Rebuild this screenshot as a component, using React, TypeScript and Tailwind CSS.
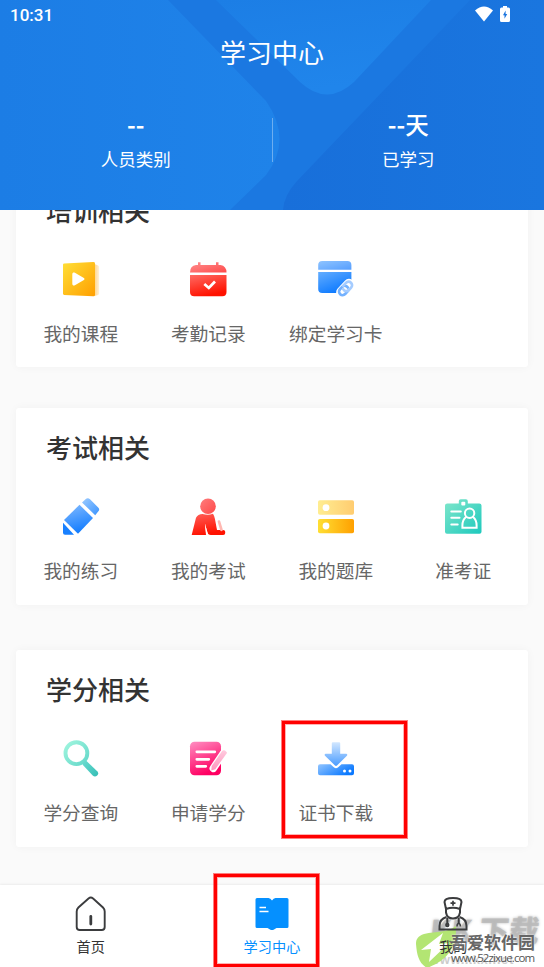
import type { ReactNode } from 'react';

type MenuItem = { label: string; icon: ReactNode; marked?: boolean };
type MenuSection = { title: string; items: MenuItem[]; className: string };

function Gradient({ id, from, to, x2 = '1', y2 = '1' }: { id: string; from: string; to: string; x2?: string; y2?: string }) {
  return (
    <linearGradient id={id} x1="0" y1="0" x2={x2} y2={y2}>
      <stop stopColor={from} />
      <stop offset="1" stopColor={to} />
    </linearGradient>
  );
}

function CourseIcon() {
  return (
    <svg viewBox="0 0 40 40" className="size-10">
      <defs>
        <Gradient id="course" from="#ffdf37" to="#ff9f00" />
        <Gradient id="coursePage" from="#ffd68a" to="#fff0d8" y2="0" />
      </defs>
      <path d="M33.500 4l3.700 1.600q.9.500.9 1.500v26.500q0 1-.9 1.400l-3.700 1z" fill="url(#coursePage)" />
      <path d="M3.200 3.500L32.300 2q1.700 0 1.700 1.400V35q0 1.300-1.700 1.200L3.200 34.900Q2 34.800 2 33.700V4.800q0-1.200 1.200-1.300z" fill="url(#course)" />
      <path d="M11.300 14.300c0-1.700 1.300-2.300 2.600-1.500l9 5.200q1.500 1 0 2l-9 5.200c-1.300.8-2.600.2-2.600-1.400z" fill="#fff" />
    </svg>
  );
}

function AttendanceIcon() {
  return (
    <svg viewBox="0 0 40 40" className="size-10">
      <defs>
        <Gradient id="calTop" from="#ff8f8f" to="#ff4a4a" />
        <Gradient id="calBody" from="#ff6a63" to="#ff1200" x2=".4" />
      </defs>
      <path d="M10 2.300h2.500V5h15.500V2.300h2.500V5h2q6 1 6 7.500H2Q2 5.500 8 5h2z" fill="url(#calTop)" />
      <path d="M2 15h36.500v17q0 4.200-4.200 4.200H6.200Q2 36.200 2 32z" fill="url(#calBody)" />
      <path d="M16.300 24l4.500 4 6.200-6.500" fill="none" stroke="#fff" strokeWidth="2.700" />
    </svg>
  );
}

function BindCardIcon() {
  return (
    <svg viewBox="0 0 40 40" className="size-10">
      <defs>
        <Gradient id="cardTop" from="#8fc4ff" to="#559eff" />
        <Gradient id="cardBody" from="#63adff" to="#0a78ff" x2=".6" />
      </defs>
      <path d="M2.200 9.700V5q0-4 4-4h25.200q4 0 4 4v4.700z" fill="url(#cardTop)" />
      <path d="M2.200 12h33.200v8.500L21.500 33H6.200q-4 0-4-4z" fill="url(#cardBody)" />
      <g transform="rotate(-47 29.500 28.500)">
        <rect x="18.500" y="22.700" width="22" height="11.500" rx="5.700" fill="#fff" />
        <path d="M29.500 32h-4.300a3.500 3.500 0 0 1 0-7h3.300a3.500 3.500 0 0 1 3.300 4.500" fill="none" stroke="#74b2ff" strokeWidth="2.700" strokeLinecap="round" />
        <path d="M29.800 25H34a3.500 3.500 0 0 1 0 7h-3.300a3.500 3.500 0 0 1-3.300-4.500" fill="none" stroke="#a5ccff" strokeWidth="2.700" strokeLinecap="round" />
      </g>
    </svg>
  );
}

function PracticeIcon() {
  return (
    <svg viewBox="0 0 40 40" className="size-10">
      <defs>
        <Gradient id="pencil" from="#83bbff" to="#157eff" x2=".3" />
        <Gradient id="pencilEnd" from="#9ccbff" to="#3b94ff" />
      </defs>
      <path d="M24.500 2.200q2.200-2 4.500 0l8.200 8.200q2 2.200 0 4.200l-3 3.600L21 5.500z" fill="url(#pencilEnd)" />
      <path d="M18.500 7.800L32 21 17 36.800 3 23z" fill="url(#pencil)" />
      <path d="M2 25.800L13 37.800H4q-2 0-2-2z" fill="#1880ff" />
    </svg>
  );
}

function ExamIcon() {
  return (
    <svg viewBox="0 0 40 40" className="size-10">
      <defs>
        <Gradient id="head" from="#ff7d7d" to="#ff4848" />
        <Gradient id="torso" from="#ff5f59" to="#ff1200" x2=".3" />
      </defs>
      <circle cx="20" cy="9.300" r="7.800" fill="url(#head)" />
      <path d="M8 20.800Q9.800 17 14.600 17q5.500 1.500 10.400-.2 1.300 2 1.900 5l2.100 11.200h6.200q2 0 2 1.800V36q0 2-2 2H22.800q-2.800 0-3.600-3.200l-2.300-8.300L18.300 38H3.700z" fill="url(#torso)" />
      <path d="M16.900 26.500l1.100 11.500 1.900-1z" fill="#fff" />
      <path d="M31 24.600l2.500 8.200" stroke="#ffb8b2" strokeWidth="2.700" strokeLinecap="round" />
    </svg>
  );
}

function QuestionBankIcon() {
  return (
    <svg viewBox="0 0 40 40" className="size-10">
      <defs>
        <Gradient id="bankTop" from="#ffed91" to="#ffcc70" y2="0" />
        <Gradient id="bankBottom" from="#ffdf34" to="#ffa000" y2="0" />
      </defs>
      <rect x="2" y="3.300" width="36" height="14.400" rx="1.800" fill="url(#bankTop)" />
      <rect x="2" y="22" width="36" height="14.200" rx="1.800" fill="url(#bankBottom)" />
      <circle cx="10" cy="10.700" r="3.400" fill="#fff" />
      <circle cx="10" cy="29" r="3.400" fill="#fff" />
    </svg>
  );
}

function AdmissionIcon() {
  return (
    <svg viewBox="0 0 40 40" className="size-10">
      <defs>
        <Gradient id="admission" from="#81e7cb" to="#1dc9bd" />
      </defs>
      <path d="M4.300 6.500h11.500V4.200q0-1.900 1.900-1.900h5.200q1.900 0 1.900 1.900v2.300h11.500q2.200 0 2.200 2v26.300q0 2-2 2H4q-2 0-2-2V8.500q0-2 2.300-2z" fill="url(#admission)" />
      <rect x="18.300" y="4.700" width="4" height="3.800" rx="1" fill="#fff" />
      <g fill="none" stroke="#fff" strokeWidth="2" strokeLinecap="round">
        <path d="M8.300 14.400h9.500M8.300 20.800h8.200M8.300 27.400h6.400" />
        <circle cx="26.600" cy="16.300" r="4.700" />
        <path d="M23 20c-2.600 2-3.600 4.500-3.600 8.500v2.300h14.200v-2.300c0-4-1-6.500-3.500-8.500" />
      </g>
    </svg>
  );
}

function QueryIcon() {
  return (
    <svg viewBox="0 0 40 40" className="size-10">
      <defs>
        <Gradient id="lens" from="#9ff5de" to="#64d8c9" />
        <Gradient id="handle" from="#6bdcd0" to="#34bdb5" />
      </defs>
      <circle cx="15.400" cy="14.200" r="10.900" fill="none" stroke="url(#lens)" strokeWidth="3.900" />
      <path d="M21.700 23.500l3.300-2 11.200 10.800q2 2.200 0 4.300-2.400 2-4.500-.1L21.900 25.900z" fill="url(#handle)" />
    </svg>
  );
}

function ApplyIcon() {
  return (
    <svg viewBox="0 0 40 40" className="size-10">
      <defs>
        <Gradient id="apply" from="#ff8fc2" to="#ff0062" x2=".4" />
        <Gradient id="pen" from="#ffcade" to="#ff95bd" x2="0" />
      </defs>
      <rect x="2" y="2.700" width="31" height="33.500" rx="4.500" fill="url(#apply)" />
      <path d="M8.800 12.800h18M8.800 20.300h12M8.800 27.300h9" stroke="#fff" strokeWidth="2.700" strokeLinecap="round" />
      <path d="M35.600 14L25.300 29.300" stroke="#fff" strokeWidth="7.500" strokeLinecap="round" />
      <path d="M37 11.600l1.600 1.400q.5.700 0 1.500L27.300 30.200l-4 1.300.4-4.500L34.100 12.100q1.400-1.400 2.900-.5z" fill="url(#pen)" />
    </svg>
  );
}

function DownloadIcon() {
  return (
    <svg viewBox="0 0 40 40" className="size-10">
      <defs>
        <Gradient id="arrow" from="#d2e7ff" to="#4a9cff" x2="0" />
        <Gradient id="tray" from="#92c5ff" to="#0b79ff" y2=".5" />
      </defs>
      <path d="M4 25.200h10.500l3.600 3.400q1.900 1.500 3.800 0l3.600-3.400H36q2 0 2 2v7q0 2-2 2H4q-2 0-2-2v-7q0-2 2-2z" fill="url(#tray)" />
      <path d="M16.800 3.200h6.400q1 0 1 1v10.600h6.200q1.500.5.5 2L21 26.500q-1 .8-2 0l-10-9.700q-1-1.500.5-2h6.300V4.200q0-1 1-1z" fill="url(#arrow)" />
      <circle cx="28.500" cy="32" r="1.500" fill="#fff" />
      <circle cx="34" cy="32" r="1.500" fill="#fff" />
    </svg>
  );
}

const sections: MenuSection[] = [
  {
    title: '培训相关',
    className: 'h-[196px]',
    items: [
      { label: '我的课程', icon: <CourseIcon /> },
      { label: '考勤记录', icon: <AttendanceIcon /> },
      { label: '绑定学习卡', icon: <BindCardIcon /> },
    ],
  },
  {
    title: '考试相关',
    className: 'mt-[41px] h-[197px]',
    items: [
      { label: '我的练习', icon: <PracticeIcon /> },
      { label: '我的考试', icon: <ExamIcon /> },
      { label: '我的题库', icon: <QuestionBankIcon /> },
      { label: '准考证', icon: <AdmissionIcon /> },
    ],
  },
  {
    title: '学分相关',
    className: 'mt-[45px] h-[197px]',
    items: [
      { label: '学分查询', icon: <QueryIcon /> },
      { label: '申请学分', icon: <ApplyIcon /> },
      { label: '证书下载', icon: <DownloadIcon />, marked: true },
    ],
  },
];

function Header() {
  return (
    <header className="relative z-10 h-[210px] shrink-0 overflow-hidden bg-[#1b78e1] text-white">
      <svg viewBox="0 0 544 210" className="absolute inset-0 h-full w-full">
        <defs>
          <Gradient id="headLeft" from="#1c7de5" to="#1f83e9" y2="0" />
          <Gradient id="headMid" from="#1c7ee5" to="#2085eb" x2=".3" />
          <Gradient id="headRight" from="#186fda" to="#1a76df" y2="0" />
        </defs>
        <path d="M0 0h168l98 101q27 39 0 74l-36 35H0z" fill="url(#headLeft)" />
        <path d="M216 0l84 82q27 25 54 0l77-82z" fill="url(#headMid)" />
        <path d="M470 0L297 181q-13 14-14 29h261V0z" fill="url(#headRight)" />
      </svg>
      <div className="relative flex h-[30px] items-center justify-between pr-[34px] pl-[10px]">
        <span className="font-[Roboto] text-[17px] leading-none font-medium">10:31</span>
        <div className="mb-0.5 flex items-center gap-[7px]">
          <svg viewBox="0 0 18 16" className="h-4 w-[18px]">
            <path d="M0 4.500Q9-3.500 18 4.500L9 15.500z" fill="#fff" />
          </svg>
          <svg viewBox="0 0 10 16" className="h-4 w-2.5">
            <path d="M3 0h4v1.500h1.500Q10 1.500 10 3v11.500q0 1.500-1.500 1.500h-7Q0 16 0 14.500V3q0-1.500 1.500-1.500H3z" fill="#fff" />
            <path d="M5.600 4.500L3 9.300h1.500v3.500L7.200 8H5.600z" fill="#1a74de" />
          </svg>
        </div>
      </div>
      <h1 className="relative mt-[3px] text-center text-[26px] leading-[38px]">学习中心</h1>
      <div className="relative mt-[37px] flex text-center">
        <div className="flex-1">
          <p className="text-[23.500px] leading-[32px] font-bold">--</p>
          <p className="mt-px text-[17.500px] leading-[36px]">人员类别</p>
        </div>
        <div className="mt-2.5 h-11 w-px bg-white/35" />
        <div className="flex-1">
          <p className="text-[23.500px] leading-[32px] font-bold">--<span className="font-medium">天</span></p>
          <p className="mt-px text-[17.500px] leading-[36px]">已学习</p>
        </div>
      </div>
    </header>
  );
}

function SectionCard({ section }: { section: MenuSection }) {
  return (
    <section className={`rounded-[3px] bg-white px-px pt-5 shadow-[0_0_10px_rgba(0,0,0,0.04)] ${section.className}`}>
      <h2 className="pl-[29px] text-[26px] leading-[38px] font-medium text-[#333]">{section.title}</h2>
      <div className="mt-[31px] grid grid-cols-4">
        {section.items.map(item => (
          <div key={item.label} className="relative flex flex-col items-center">
            {item.icon}
            <span className="mt-[18.500px] text-[18.700px] leading-[28px] whitespace-nowrap text-[#666]">{item.label}</span>
            {item.marked && (
              <div className="absolute -top-[18px] left-[10px] h-[117px] w-[125px] border-[3px] border-[#ff0000] shadow-[0_0_0_1px_rgba(255,0,0,0.5),inset_0_0_0_1px_rgba(255,0,0,0.3)]" />
            )}
          </div>
        ))}
      </div>
    </section>
  );
}

// Large grey site mark and the leaf badge, drawn under the tab label
function WatermarkBack() {
  return (
    <div className="absolute top-[25px] left-[415px] h-[60px] w-[129px]">
      <p className="absolute top-0 left-[15px] -skew-x-6 text-[30px] leading-[38px] font-black whitespace-nowrap text-[#b9b9b9]/80 [text-shadow:0_0_3px_#bbb]">KK 下载</p>
      <p className="absolute top-[42px] left-[14px] font-['Liberation_Sans'] text-[13px] leading-[16px] font-bold tracking-[0.600px] text-[#cccccc]">www.kkx.net</p>
      <svg viewBox="0 0 44 44" className="absolute top-[15px] left-0 size-11">
        <path d="M41 1C32 8 22 6 9 9 3 11 1 14 1 19 2 31 4 38 12 43 31 36 42 24 41 1z" fill="#b3e573" />
        <path d="M28 8L6 25l10-1-2 13 20-19-10 1z" fill="#fff" />
      </svg>
    </div>
  );
}

function WatermarkFront() {
  return (
    <div className="absolute top-[45px] left-[450px]">
      <p className="text-[17px] leading-[24px] font-bold whitespace-nowrap text-[#666] [text-shadow:0_0_2px_white]">吾爱软件园</p>
      <p className="-mt-1 pl-px font-['Open_Sans'] text-[11.500px] leading-[16px] font-medium tracking-[-0.900px] whitespace-nowrap text-[#555] [text-shadow:0_0_2px_white]">www.52zixue.com</p>
    </div>
  );
}

function TabBar() {
  return (
    <nav className="relative flex h-[82px] shrink-0 bg-white text-[14.200px] leading-5 text-[#333] shadow-[0_-1px_2px_rgba(0,0,0,0.06)]">
      <div className="flex flex-1 flex-col items-center pt-[9px]">
        <svg viewBox="0 0 36 40" className="h-10 w-9" fill="none" stroke="#3b3c3e" strokeWidth="1.900">
          <path d="M15.500 4.500q2.300-1.800 4.600 0L30 13.500q1.700 1.700 1.700 4V33q0 3-3 3h-22q-3 0-3-3V17.500q0-2.300 1.700-4z" />
          <path d="M17.800 22.500v7.500" strokeWidth="2.800" strokeLinecap="round" />
        </svg>
        <span className="mt-0.5">首页</span>
      </div>
      <div className="relative flex flex-1 flex-col items-center pt-[9px] text-[#0590ff]">
        <svg viewBox="0 0 36 40" className="h-10 w-9">
          <path d="M3 4h11.500q2 .3 3.500 2.500Q19.500 4.300 21.500 4H33q1.500 0 1.500 1.500v27q0 1.500-1.500 1.500H22.500L20 35.500q-2 1-4 0L13.500 34H3q-1.500 0-1.500-1.500v-27Q1.500 4 3 4z" fill="#0590ff" />
          <path d="M5.500 13.500H12M5.500 17.500h9" stroke="#fff" strokeWidth="1.700" />
        </svg>
        <span className="mt-0.5">学习中心</span>
        <div className="absolute -top-[11px] left-[33px] h-[93px] w-[105px] border-[3px] border-[#ff0000] shadow-[0_0_0_1px_rgba(255,0,0,0.5),inset_0_0_0_1px_rgba(255,0,0,0.3)]" />
      </div>
      <WatermarkBack />
      <div className="relative flex flex-1 flex-col items-center pt-[9px]">
        <svg viewBox="0 0 36 40" className="h-10 w-9" fill="none" stroke="#3b3c3e" strokeWidth="2">
          <path d="M11 15L9.500 8Q9.500 4 18 4t8.500 4L25 15Q18 12.500 11 15z" strokeLinejoin="round" />
          <path d="M11 15v3.500q1 6 7 6t7-6V15" />
          <path d="M18 6.700v5M15.500 9.200h5" strokeWidth="1.700" />
          <path d="M11.500 23Q4.500 25 4.500 32v3.500h27V32q0-7-7-9M12.300 24v5.500M23.700 24v5.500" />
          <circle cx="12.300" cy="31" r="1.200" />
          <path d="M22 32.500q0-3 1.700-3t1.700 3" strokeWidth="1.500" />
        </svg>
        <span className="mt-0.5">我的</span>
      </div>
      <WatermarkFront />
    </nav>
  );
}

export default function App() {
  return (
    <div className="flex h-[967px] w-[544px] flex-col overflow-hidden bg-[#fafafa] font-['Noto_Sans_CJK_SC',sans-serif]">
      <Header />
      <main className="min-h-0 flex-1 overflow-hidden px-4">
        <div className="-mt-[39px]">
          {sections.map(section => (
            <SectionCard key={section.title} section={section} />
          ))}
        </div>
      </main>
      <TabBar />
    </div>
  );
}
